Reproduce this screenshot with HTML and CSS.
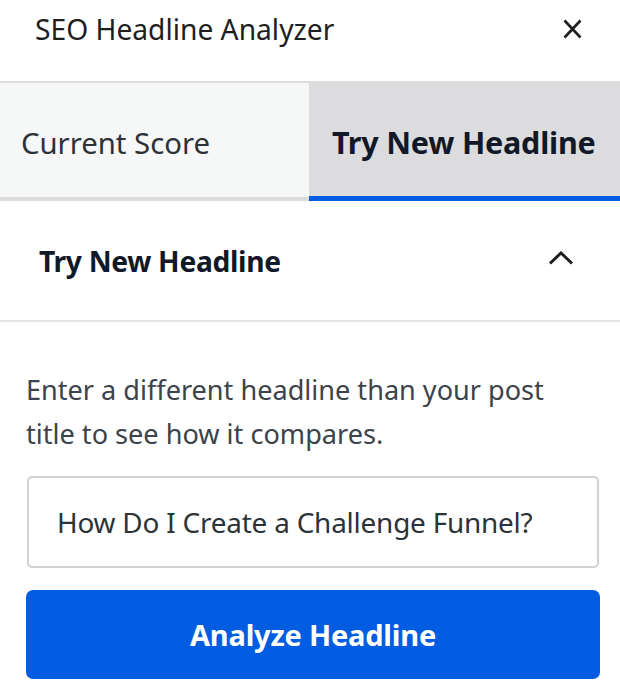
FILE: index.html
```html
<!DOCTYPE html>
<html>
<head>
<meta charset="utf-8">
<link rel="stylesheet" href="styles.css">
</head>
<body>
<div class="panel">
  <header class="top">
    <h1 class="title">SEO Headline Analyzer</h1>
    <button class="close" aria-label="Close">
      <svg width="19" height="20" viewBox="0 0 19 20"><path d="M1.5 1.5 L17.5 18.5 M17.5 1.5 L1.5 18.5" stroke="#1e1e1e" stroke-width="2.6" fill="none"/></svg>
    </button>
  </header>
  <nav class="tabs">
    <div class="tab">Current Score</div>
    <div class="tab active">Try New Headline</div>
  </nav>
  <section class="section">
    <div class="section-head">
      <h2 class="section-title">Try New Headline</h2>
      <svg class="chev" width="26" height="14" viewBox="0 0 26 14"><path d="M2 12.5 L13 2 L24 12.5" stroke="#1e1e1e" stroke-width="3" fill="none"/></svg>
    </div>
    <div class="section-body">
      <p class="desc">Enter a different headline than your post title to see how it compares.</p>
      <div class="input">How Do I Create a Challenge Funnel?</div>
      <button class="analyze">Analyze Headline</button>
    </div>
  </section>
</div>
</body>
</html>
```
FILE: styles.css
```css
* { box-sizing: border-box; }
html, body { margin: 0; padding: 0; background: #fff; }
body { font-family: "Noto Sans", "Open Sans", sans-serif; color: #1e1e1e; }
.panel { width: 620px; }
.top {
  height: 83px;
  display: flex;
  align-items: center;
  justify-content: space-between;
  padding: 0 38px 24px 35px;
  border-bottom: 2px solid #dddddd;
}
.title { margin: 0; font-size: 28.2px; font-weight: 400; line-height: 36px; }
.close { background: none; border: 0; padding: 0; display: flex; }
.tabs { display: flex; height: 118px; }
.tab {
  flex: 1;
  display: flex;
  align-items: center;
  padding: 5px 0 0 21px;
  font-size: 29.3px;
  color: #2c3338;
  background: #f6f7f7;
  border-bottom: 4px solid #dcdcde;
}
.tab.active {
  background: #dcdcde;
  border-bottom: 5px solid #005ce0;
  color: #111827;
  font-weight: 700;
  font-size: 30.5px;
  padding-left: 23px;
  letter-spacing: -0.2px;
}
.section-head {
  height: 121px;
  display: flex;
  align-items: center;
  justify-content: space-between;
  padding: 0 46px 0 39px;
  border-bottom: 2px solid #e4e4e4;
}
.section-title { margin: 0; font-size: 28.2px; font-weight: 700; color: #111827; letter-spacing: -0.3px; }
.chev { margin-top: -6px; }
.section-body { padding: 46px 21px 20px 26px; }
.desc { margin: 0 0 20px; max-width: 565px; font-size: 27.1px; line-height: 44px; color: #3c434a; }
.input {
  height: 92px;
  margin-left: 1px;
  border: 2px solid #d0d0d5;
  border-radius: 5px;
  display: flex;
  align-items: center;
  padding-left: 28px;
  font-size: 27.9px;
  color: #2c3338;
  letter-spacing: -0.2px;
}
.analyze {
  margin-top: 22px;
  width: 574px;
  height: 89px;
  border: 0;
  border-radius: 7px;
  background: #005ce0;
  color: #fff;
  font-family: inherit;
  font-size: 29px;
  font-weight: 700;
  letter-spacing: -0.2px;
}
```
